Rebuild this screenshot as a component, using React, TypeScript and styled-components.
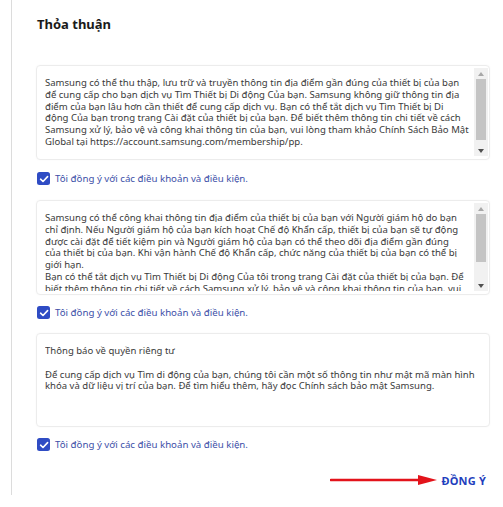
import React from "react";
import styled, { createGlobalStyle } from "styled-components";

const GlobalStyle = createGlobalStyle`
  html, body { margin: 0; padding: 0; background: #ffffff; }
  body { font-family: "Noto Sans", "Open Sans", sans-serif; }
  *, *::before, *::after { box-sizing: border-box; }
`;

const Page = styled.div`
  margin-left: 11px;
  width: 492px;
  height: 495px;
  border-left: 1px solid #dcdcdc;
  padding: 0 13px 0 24px;
  display: flex;
  flex-direction: column;
`;

const Title = styled.h1`
  margin: 16px 0 0 1px;
  font-size: 13px;
  line-height: 16px;
  font-weight: 700;
  color: #1a1a1a;
`;

const Box = styled.div<{ $mt: number; $h: number }>`
  margin-top: ${(p) => p.$mt}px;
  height: ${(p) => p.$h}px;
  flex-shrink: 0;
  border: 1px solid #ececec;
  border-radius: 4px;
  box-shadow: 0 0 2px rgba(0, 0, 0, 0.04);
  padding: 2px 1px 3px 8px;
  display: flex;
`;

const Content = styled.div`
  flex: 1;
  min-width: 0;
  overflow: hidden;
`;

const ScrollBar = styled.div`
  width: 14px;
  flex-shrink: 0;
  background: #f1f1f1;
  display: flex;
  flex-direction: column;
`;

const ScrollButton = styled.div`
  height: 11px;
  display: flex;
  align-items: center;
  justify-content: center;
`;

const Track = styled.div`
  flex: 1;
  padding: 0 2px;
`;

const Thumb = styled.div`
  background: #c4c4c4;
`;

const Text = styled.div`
  padding-top: 9px;
  font-size: 9.55px;
  line-height: 11.8px;
  color: #3a3a3a;
  white-space: nowrap;
`;

const Line = styled.div`
  min-height: 11.8px;
`;

const AgreeRow = styled.label<{ $mt: number }>`
  margin-top: ${(p) => p.$mt}px;
  margin-left: 1px;
  display: flex;
  align-items: center;
  gap: 5px;
  height: 13px;
  flex-shrink: 0;
  cursor: pointer;
`;

const Check = styled.span`
  width: 13px;
  height: 13px;
  border-radius: 2.5px;
  background: #2f4cc4;
  display: flex;
  align-items: center;
  justify-content: center;
  flex-shrink: 0;
`;

const AgreeText = styled.span`
  font-size: 9.7px;
  line-height: 13px;
  color: #3d4fa8;
`;

const Footer = styled.div`
  margin-top: 22px;
  display: flex;
  justify-content: flex-end;
  align-items: center;
  gap: 3px;
  padding-right: 4px;
  height: 14px;
`;

const ConfirmButton = styled.button`
  border: none;
  background: none;
  padding: 0;
  font-family: "Noto Sans", sans-serif;
  font-size: 11px;
  font-weight: 700;
  color: #1f3fbd;
  letter-spacing: 0.2px;
  white-space: nowrap;
  cursor: pointer;
`;

const box1 = [
  "Samsung có thể thu thập, lưu trữ và truyền thông tin địa điểm gần đúng của thiết bị của bạn",
  "để cung cấp cho bạn dịch vụ Tìm Thiết bị Di động Của bạn. Samsung không giữ thông tin địa",
  "điểm của bạn lâu hơn cần thiết để cung cấp dịch vụ. Bạn có thể tắt dịch vụ Tìm Thiết bị Di",
  "động Của bạn trong trang Cài đặt của thiết bị của bạn. Để biết thêm thông tin chi tiết về cách",
  "Samsung xử lý, bảo vệ và công khai thông tin của bạn, vui lòng tham khảo Chính Sách Bảo Mật",
  "Global tại https://account.samsung.com/membership/pp.",
];

const box2 = [
  "Samsung có thể công khai thông tin địa điểm của thiết bị của bạn với Người giám hộ do bạn",
  "chỉ định. Nếu Người giám hộ của bạn kích hoạt Chế độ Khẩn cấp, thiết bị của bạn sẽ tự động",
  "được cài đặt để tiết kiệm pin và Người giám hộ của bạn có thể theo dõi địa điểm gần đúng",
  "của thiết bị của bạn. Khi vận hành Chế độ Khẩn cấp, chức năng của thiết bị của bạn có thể bị",
  "giới hạn.",
  "Bạn có thể tắt dịch vụ Tìm Thiết bị Di động Của tôi trong trang Cài đặt của thiết bị của bạn. Để",
  "biết thêm thông tin chi tiết về cách Samsung xử lý, bảo vệ và công khai thông tin của bạn, vui",
  "lòng tham khảo Chính Sách Bảo Mật Global tại https://account.samsung.com/membership/pp.",
];

const box3 = [
  "Thông báo về quyền riêng tư",
  "",
  "Để cung cấp dịch vụ Tìm di động của bạn, chúng tôi cần một số thông tin như mật mã màn hình",
  "khóa và dữ liệu vị trí của bạn. Để tìm hiểu thêm, hãy đọc Chính sách bảo mật Samsung.",
];

const CheckIcon = () => (
  <svg width="10" height="10" viewBox="0 0 10 10">
    <path d="M1.6 5.2 L4 7.5 L8.6 2.6" fill="none" stroke="#fff" strokeWidth="1.6" strokeLinecap="round" strokeLinejoin="round" />
  </svg>
);

const Arrow = () => (
  <svg width="108" height="12" viewBox="0 0 108 12">
    <line x1="1" y1="6" x2="92" y2="6" stroke="#e3131b" strokeWidth="2.6" strokeLinecap="round" />
    <polygon points="88,1 107,6 88,11" fill="#e3131b" />
  </svg>
);

const Scroller = ({ thumb }: { thumb: number }) => (
  <ScrollBar>
    <ScrollButton>
      <svg width="6" height="4" viewBox="0 0 6 4">
        <polygon points="3,0 6,4 0,4" fill="#a8a8a8" />
      </svg>
    </ScrollButton>
    <Track>
      <Thumb style={{ height: thumb }} />
    </Track>
    <ScrollButton>
      <svg width="6" height="4" viewBox="0 0 6 4">
        <polygon points="0,0 6,0 3,4" fill="#505050" />
      </svg>
    </ScrollButton>
  </ScrollBar>
);

const Agree = ({ mt }: { mt: number }) => (
  <AgreeRow $mt={mt}>
    <Check>
      <CheckIcon />
    </Check>
    <AgreeText>Tôi đồng ý với các điều khoản và điều kiện.</AgreeText>
  </AgreeRow>
);

const Lines = ({ lines }: { lines: string[] }) => (
  <>
    {lines.map((l, i) => (
      <Line key={i}>{l}</Line>
    ))}
  </>
);

export default function App() {
  return (
    <>
      <GlobalStyle />
      <Page>
        <Title>Thỏa thuận</Title>
        <Box $mt={33} $h={95}>
          <Content>
            <Text>
              <Lines lines={box1} />
            </Text>
          </Content>
          <Scroller thumb={61} />
        </Box>
        <Agree mt={12} />
        <Box $mt={15} $h={95}>
          <Content>
            <Text>
              <Lines lines={box2} />
            </Text>
          </Content>
          <Scroller thumb={48} />
        </Box>
        <Agree mt={11} />
        <Box $mt={14} $h={94}>
          <Content>
            <Text>
              <Lines lines={box3} />
            </Text>
          </Content>
        </Box>
        <Agree mt={11} />
        <Footer>
          <Arrow />
          <ConfirmButton>ĐỒNG Ý</ConfirmButton>
        </Footer>
      </Page>
    </>
  );
}
